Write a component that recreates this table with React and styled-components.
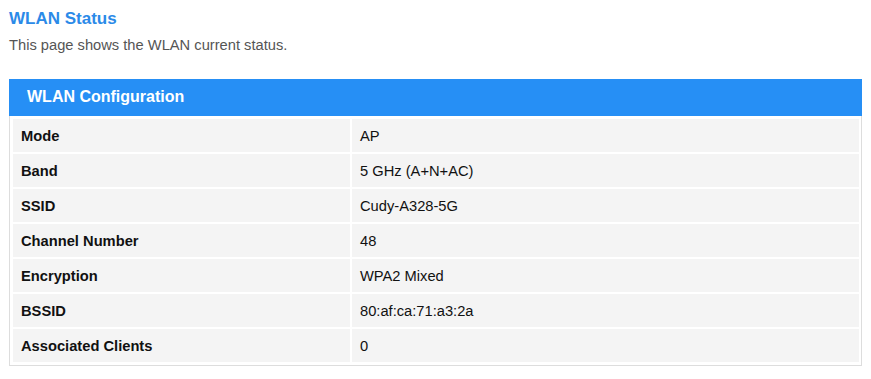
import styled, { createGlobalStyle } from 'styled-components';

const rows = [
  ['Mode', 'AP'],
  ['Band', '5 GHz (A+N+AC)'],
  ['SSID', 'Cudy-A328-5G'],
  ['Channel Number', '48'],
  ['Encryption', 'WPA2 Mixed'],
  ['BSSID', '80:af:ca:71:a3:2a'],
  ['Associated Clients', '0'],
];

export default function App() {
  return (
    <>
      <GlobalStyle />
      <Page>
        <Title>WLAN Status</Title>
        <Subtitle>This page shows the WLAN current status.</Subtitle>
        <Panel>
          <PanelHeader>WLAN Configuration</PanelHeader>
          <PanelBody>
            {rows.map(([label, value]) => (
              <Row key={label}>
                <Label>{label}</Label>
                <Value>{value}</Value>
              </Row>
            ))}
          </PanelBody>
        </Panel>
      </Page>
    </>
  );
}

const GlobalStyle = createGlobalStyle`
  body {
    margin: 0;
    background: #fff;
    font-family: "Liberation Sans", Arial, sans-serif;
  }
`;

const Page = styled.div`
  padding: 9px 9px 0 9px;
  width: 853px;
`;

const Title = styled.div`
  font-size: 17px;
  font-weight: bold;
  color: #2b8ae8;
  line-height: 20px;
`;

const Subtitle = styled.div`
  font-size: 14.7px;
  color: #555;
  line-height: 18px;
  margin-top: 7px;
`;

const Panel = styled.div`
  margin-top: 25px;
`;

const PanelHeader = styled.div`
  height: 37px;
  background: #268ff5;
  color: #fff;
  font-size: 16px;
  font-weight: bold;
  line-height: 36px;
  padding-left: 18px;
`;

const PanelBody = styled.div`
  border: 1px solid #ddd;
  border-top: none;
  padding: 3px 2px 3px 3px;
  display: flex;
  flex-direction: column;
  gap: 2px;
`;

const Row = styled.div`
  display: grid;
  grid-template-columns: 337px 1fr;
  gap: 2px;
  height: 33px;
`;

const Cell = styled.div`
  background: #f4f4f4;
  font-size: 14.7px;
  color: #111;
  display: flex;
  align-items: center;
`;

const Label = styled(Cell)`
  font-weight: bold;
  padding-left: 8px;
`;

const Value = styled(Cell)`
  padding-left: 8px;
`;
